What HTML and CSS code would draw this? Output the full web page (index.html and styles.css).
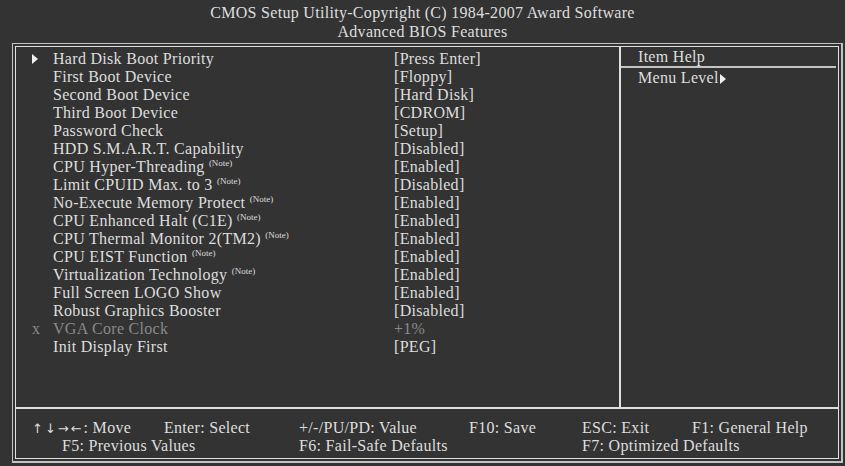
FILE: index.html
```html
<html>
  <head>
    <link rel="stylesheet" href="styles.css">
  </head>
  <body>
    <div class="title">
      <div>CMOS Setup Utility-Copyright (C) 1984-2007 Award Software</div>
      <div>Advanced BIOS Features</div>
    </div>

    <div class="frame">
      <div class="inner">
        <div class="main">
          <div class="items">
            <div class="row"><span class="mark"><i class="tri"></i></span><span class="label">Hard Disk Boot Priority</span><span class="value">[Press Enter]</span></div>
            <div class="row"><span class="mark"></span><span class="label">First Boot Device</span><span class="value">[Floppy]</span></div>
            <div class="row"><span class="mark"></span><span class="label">Second Boot Device</span><span class="value">[Hard Disk]</span></div>
            <div class="row"><span class="mark"></span><span class="label">Third Boot Device</span><span class="value">[CDROM]</span></div>
            <div class="row"><span class="mark"></span><span class="label">Password Check</span><span class="value">[Setup]</span></div>
            <div class="row"><span class="mark"></span><span class="label">HDD S.M.A.R.T. Capability</span><span class="value">[Disabled]</span></div>
            <div class="row"><span class="mark"></span><span class="label">CPU Hyper-Threading <sup>(Note)</sup></span><span class="value">[Enabled]</span></div>
            <div class="row"><span class="mark"></span><span class="label">Limit CPUID Max. to 3 <sup>(Note)</sup></span><span class="value">[Disabled]</span></div>
            <div class="row"><span class="mark"></span><span class="label">No-Execute Memory Protect <sup>(Note)</sup></span><span class="value">[Enabled]</span></div>
            <div class="row"><span class="mark"></span><span class="label">CPU Enhanced Halt (C1E) <sup>(Note)</sup></span><span class="value">[Enabled]</span></div>
            <div class="row"><span class="mark"></span><span class="label">CPU Thermal Monitor 2(TM2) <sup>(Note)</sup></span><span class="value">[Enabled]</span></div>
            <div class="row"><span class="mark"></span><span class="label">CPU EIST Function <sup>(Note)</sup></span><span class="value">[Enabled]</span></div>
            <div class="row"><span class="mark"></span><span class="label">Virtualization Technology <sup>(Note)</sup></span><span class="value">[Enabled]</span></div>
            <div class="row"><span class="mark"></span><span class="label">Full Screen LOGO Show</span><span class="value">[Enabled]</span></div>
            <div class="row"><span class="mark"></span><span class="label">Robust Graphics Booster</span><span class="value">[Disabled]</span></div>
            <div class="row disabled"><span class="mark">x</span><span class="label">VGA Core Clock</span><span class="value">+1%</span></div>
            <div class="row"><span class="mark"></span><span class="label">Init Display First</span><span class="value">[PEG]</span></div>
          </div>
          <div class="help">
            <div class="help-head">Item Help</div>
            <div class="help-body">Menu Level<i class="tri small"></i></div>
          </div>
        </div>

        <div class="footer">
          <span><span class="arrows">&uarr;&darr;&rarr;&larr;</span>: Move</span>
          <span>Enter: Select</span>
          <span>+/-/PU/PD: Value</span>
          <span>F10: Save</span>
          <span>ESC: Exit</span>
          <span>F1: General Help</span>
          <span class="wide indent">F5: Previous Values</span>
          <span class="wide">F6: Fail-Safe Defaults</span>
          <span class="wide">F7: Optimized Defaults</span>
        </div>
      </div>
    </div>
  </body>
</html>
```

FILE: styles.css
```css
body {
  margin: 0;
  width: 845px;
  height: 466px;
  background: #333333;
  color: #dedede;
  font-family: "Liberation Serif", "Times New Roman", serif;
  font-size: 16px;
  letter-spacing: 0.3px;
  overflow: hidden;
}

.title {
  height: 43px;
  padding-top: 3px;
  box-sizing: border-box;
  text-align: center;
  line-height: 19px;
}

.frame {
  margin: 0 2px 0 12px;
  border: 2px solid #c4c4c4;
  border-top-width: 1px;
  border-left-width: 1px;
  padding: 2px;
  height: 420px;
  box-sizing: border-box;
}

.inner {
  border: 1px solid #e0e0e0;
  height: 100%;
  box-sizing: border-box;
  display: flex;
  flex-direction: column;
}

.main {
  display: flex;
  height: 360px;
  border-bottom: 2px solid #e0e0e0;
}

.items {
  width: 605px;
  box-sizing: border-box;
  border-right: 2px solid #e0e0e0;
  padding: 3px 0 0 16px;
}

.row {
  display: flex;
  height: 18px;
  line-height: 18px;
  white-space: nowrap;
}

.mark {
  width: 21px;
  display: flex;
  align-items: center;
}

.label {
  width: 341px;
}

.disabled {
  color: #8a8a8a;
}

sup {
  font-size: 9px;
  letter-spacing: 0;
  vertical-align: 6px;
  line-height: 0;
}

.tri {
  display: inline-block;
  width: 0;
  height: 0;
  border-top: 5px solid transparent;
  border-bottom: 5px solid transparent;
  border-left: 6px solid #f0f0f0;
}

.tri.small {
  margin-left: 1px;
  vertical-align: -1px;
}

.help {
  flex: 1;
}

.help-head {
  height: 18px;
  line-height: 18px;
  padding: 1px 0 0 17px;
  border-bottom: 2px solid #c4c4c4;
  margin-right: 2px;
}

.help-body {
  padding-left: 17px;
  line-height: 18px;
  margin-top: 1px;
}

.footer {
  flex: 1;
  display: grid;
  grid-template-columns: 132px 135px 170px 113px 110px auto;
  grid-auto-rows: 18px;
  align-content: start;
  padding: 10px 0 0 16px;
  line-height: 18px;
  white-space: nowrap;
}

.arrows {
  font-family: "DejaVu Sans", sans-serif;
  font-size: 13px;
  letter-spacing: 2px;
}

.footer .wide {
  grid-column: span 2;
}

.footer .indent {
  padding-left: 30px;
}
```
